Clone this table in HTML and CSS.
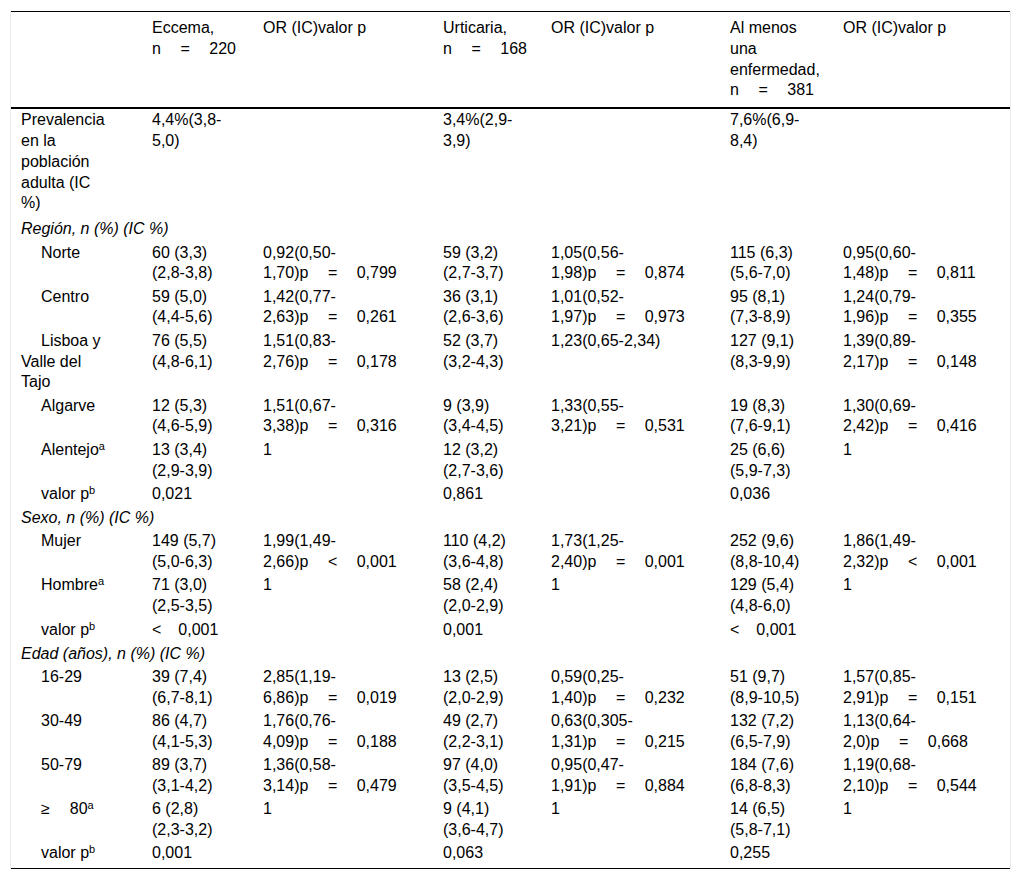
FILE: index.html
```html
<!DOCTYPE html>
<html lang="es">
<head>
<meta charset="utf-8">
<title>Tabla</title>
<link rel="stylesheet" href="styles.css">
</head>
<body>
<div class="wrap">
<table class="data">
<colgroup>
<col class="c1"><col class="c2"><col class="c3"><col class="c4"><col class="c5"><col class="c6"><col class="c7">
</colgroup>
<thead>
<tr>
<th></th>
<th>Eccema, <span class="nw">n<span class="op">=</span>220</span></th>
<th>OR (IC)valor p</th>
<th>Urticaria, <span class="nw">n<span class="op">=</span>168</span></th>
<th>OR (IC)valor p</th>
<th>Al menos una enfermedad, <span class="nw">n<span class="op">=</span>381</span></th>
<th>OR (IC)valor p</th>
</tr>
</thead>
<tbody>
<tr class="first">
<td class="lbl">Prevalencia en la población adulta (IC %)</td>
<td>4,4%(3,8-<wbr>5,0)</td><td></td>
<td>3,4%(2,9-<wbr>3,9)</td><td></td>
<td>7,6%(6,9-<wbr>8,4)</td><td></td>
</tr>
<tr class="cat"><td colspan="7">Región, n (%) (IC %)</td></tr>
<tr>
<td class="lbl sub">Norte</td>
<td>60 (3,3) (2,8-3,8)</td>
<td>0,92(0,50-<wbr><span class="nw">1,70)p<span class="op">=</span>0,799</span></td>
<td>59 (3,2) (2,7-3,7)</td>
<td>1,05(0,56-<wbr><span class="nw">1,98)p<span class="op">=</span>0,874</span></td>
<td>115 (6,3) (5,6-7,0)</td>
<td>0,95(0,60-<wbr><span class="nw">1,48)p<span class="op">=</span>0,811</span></td>
</tr>
<tr>
<td class="lbl sub">Centro</td>
<td>59 (5,0) (4,4-5,6)</td>
<td>1,42(0,77-<wbr><span class="nw">2,63)p<span class="op">=</span>0,261</span></td>
<td>36 (3,1) (2,6-3,6)</td>
<td>1,01(0,52-<wbr><span class="nw">1,97)p<span class="op">=</span>0,973</span></td>
<td>95 (8,1) (7,3-8,9)</td>
<td>1,24(0,79-<wbr><span class="nw">1,96)p<span class="op">=</span>0,355</span></td>
</tr>
<tr>
<td class="lbl sub">Lisboa y Valle del Tajo</td>
<td>76 (5,5) (4,8-6,1)</td>
<td>1,51(0,83-<wbr><span class="nw">2,76)p<span class="op">=</span>0,178</span></td>
<td>52 (3,7) (3,2-4,3)</td>
<td>1,23(0,65-2,34)</td>
<td>127 (9,1) (8,3-9,9)</td>
<td>1,39(0,89-<wbr><span class="nw">2,17)p<span class="op">=</span>0,148</span></td>
</tr>
<tr>
<td class="lbl sub">Algarve</td>
<td>12 (5,3) (4,6-5,9)</td>
<td>1,51(0,67-<wbr><span class="nw">3,38)p<span class="op">=</span>0,316</span></td>
<td>9 (3,9) (3,4-4,5)</td>
<td>1,33(0,55-<wbr><span class="nw">3,21)p<span class="op">=</span>0,531</span></td>
<td>19 (8,3) (7,6-9,1)</td>
<td>1,30(0,69-<wbr><span class="nw">2,42)p<span class="op">=</span>0,416</span></td>
</tr>
<tr>
<td class="lbl sub">Alentejo<sup>a</sup></td>
<td>13 (3,4) (2,9-3,9)</td>
<td>1</td>
<td>12 (3,2) (2,7-3,6)</td>
<td></td>
<td>25 (6,6) (5,9-7,3)</td>
<td>1</td>
</tr>
<tr class="pv">
<td class="lbl sub">valor p<sup>b</sup></td>
<td>0,021</td><td></td>
<td>0,861</td><td></td>
<td>0,036</td><td></td>
</tr>
<tr class="cat"><td colspan="7">Sexo, n (%) (IC %)</td></tr>
<tr>
<td class="lbl sub">Mujer</td>
<td>149 (5,7) (5,0-6,3)</td>
<td>1,99(1,49-<wbr><span class="nw">2,66)p<span class="op">&lt;</span>0,001</span></td>
<td>110 (4,2) (3,6-4,8)</td>
<td>1,73(1,25-<wbr><span class="nw">2,40)p<span class="op">=</span>0,001</span></td>
<td>252 (9,6) (8,8-10,4)</td>
<td>1,86(1,49-<wbr><span class="nw">2,32)p<span class="op">&lt;</span>0,001</span></td>
</tr>
<tr>
<td class="lbl sub">Hombre<sup>a</sup></td>
<td>71 (3,0) (2,5-3,5)</td>
<td>1</td>
<td>58 (2,4) (2,0-2,9)</td>
<td>1</td>
<td>129 (5,4) (4,8-6,0)</td>
<td>1</td>
</tr>
<tr class="pv">
<td class="lbl sub">valor p<sup>b</sup></td>
<td><span class="rel">&lt;</span>0,001</td><td></td>
<td>0,001</td><td></td>
<td><span class="rel">&lt;</span>0,001</td><td></td>
</tr>
<tr class="cat"><td colspan="7">Edad (años), n (%) (IC %)</td></tr>
<tr>
<td class="lbl sub">16-29</td>
<td>39 (7,4) (6,7-8,1)</td>
<td>2,85(1,19-<wbr><span class="nw">6,86)p<span class="op">=</span>0,019</span></td>
<td>13 (2,5) (2,0-2,9)</td>
<td>0,59(0,25-<wbr><span class="nw">1,40)p<span class="op">=</span>0,232</span></td>
<td>51 (9,7) (8,9-10,5)</td>
<td>1,57(0,85-<wbr><span class="nw">2,91)p<span class="op">=</span>0,151</span></td>
</tr>
<tr>
<td class="lbl sub">30-49</td>
<td>86 (4,7) (4,1-5,3)</td>
<td>1,76(0,76-<wbr><span class="nw">4,09)p<span class="op">=</span>0,188</span></td>
<td>49 (2,7) (2,2-3,1)</td>
<td>0,63(0,305-<wbr><span class="nw">1,31)p<span class="op">=</span>0,215</span></td>
<td>132 (7,2) (6,5-7,9)</td>
<td>1,13(0,64-<wbr><span class="nw">2,0)p<span class="op">=</span>0,668</span></td>
</tr>
<tr>
<td class="lbl sub">50-79</td>
<td>89 (3,7) (3,1-4,2)</td>
<td>1,36(0,58-<wbr><span class="nw">3,14)p<span class="op">=</span>0,479</span></td>
<td>97 (4,0) (3,5-4,5)</td>
<td>0,95(0,47-<wbr><span class="nw">1,91)p<span class="op">=</span>0,884</span></td>
<td>184 (7,6) (6,8-8,3)</td>
<td>1,19(0,68-<wbr><span class="nw">2,10)p<span class="op">=</span>0,544</span></td>
</tr>
<tr>
<td class="lbl sub"><span class="rel ge">≥</span>80<sup>a</sup></td>
<td>6 (2,8) (2,3-3,2)</td>
<td>1</td>
<td>9 (4,1) (3,6-4,7)</td>
<td>1</td>
<td>14 (6,5) (5,8-7,1)</td>
<td>1</td>
</tr>
<tr class="pv last">
<td class="lbl sub">valor p<sup>b</sup></td>
<td>0,001</td><td></td>
<td>0,063</td><td></td>
<td>0,255</td><td></td>
</tr>
</tbody>
</table>
</div>
</body>
</html>
```

FILE: styles.css
```css
html, body {
  margin: 0;
  padding: 0;
  background: #fff;
}

body {
  font-family: "Liberation Sans", Arial, Helvetica, sans-serif;
  font-size: 16px;
  color: #000;
}

.wrap {
  margin: 11px 10px;
  border-left: 1px solid #ebebeb;
  border-right: 1px solid #ebebeb;
}

.data {
  width: 100%;
  border-collapse: collapse;
  table-layout: fixed;
  border-top: 1px solid #000;
  border-bottom: 1px solid #000;
}

.c1 { width: 131px; }
.c2 { width: 111px; }
.c3 { width: 180px; }
.c4 { width: 108px; }
.c5 { width: 179px; }
.c6 { width: 113px; }
.c7 { width: 177px; }

.data th {
  font-weight: normal;
  text-align: left;
  vertical-align: top;
  padding: 6px 10px 5.8px;
  line-height: 20.8px;
  border-bottom: 2px solid #000;
}

.data td {
  vertical-align: top;
  text-align: left;
  padding: 1.25px 10px;
  line-height: 20.8px;
}

.data td.lbl {
  padding-right: 30px;
}

.data th:nth-child(2),
.data td:nth-child(2),
.data th:nth-child(4),
.data td:nth-child(4) {
  padding-right: 20px;
}

.data th:nth-child(6),
.data td:nth-child(6) {
  padding-right: 12px;
}

.data td.sub {
  text-indent: 20px;
}

.first td {
  padding-bottom: 3.8px;
}

.cat td {
  font-style: italic;
}

.pv td {
  padding-bottom: 2.2px;
}

.pv.last td {
  padding-bottom: 4px;
}

.nw {
  white-space: nowrap;
}

.op {
  margin: 0 19.5px;
}

.rel {
  margin-right: 17px;
}

.rel.ge {
  margin-right: 20px;
}

sup {
  font-size: 11px;
  line-height: 0;
  vertical-align: 5px;
}
```
